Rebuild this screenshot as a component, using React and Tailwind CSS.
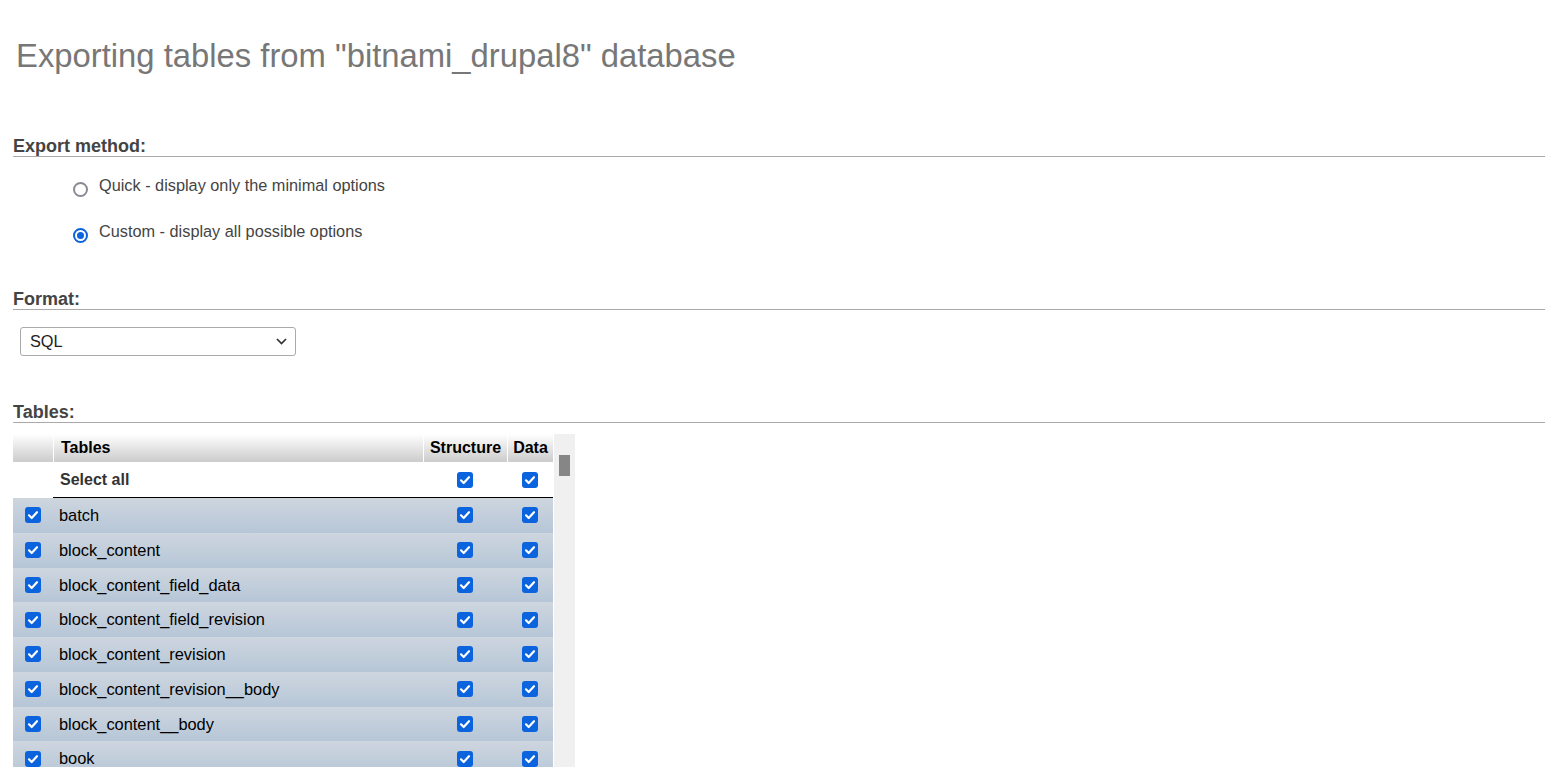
import React from 'react';

const tables = [
  'batch',
  'block_content',
  'block_content_field_data',
  'block_content_field_revision',
  'block_content_revision',
  'block_content_revision__body',
  'block_content__body',
  'book',
  'cache_bootstrap',
  'cache_config',
];

const Check = () => (
  <span className="inline-flex w-4 h-4 rounded-[3px] bg-[#0b63dd] items-center justify-center">
    <svg viewBox="0 0 16 16" className="w-4 h-4">
      <path d="M4 8.3 L6.7 11 L12 5.2" fill="none" stroke="white" strokeWidth="2.2" strokeLinecap="round" strokeLinejoin="round" />
    </svg>
  </span>
);

const Legend = ({ children, className = '' }) => (
  <div className={`text-[18px] leading-[20px] font-bold text-[#444] border-b border-[#aaa] ${className}`}>
    {children}
  </div>
);

export default function App() {
  return (
    <div className="h-screen overflow-hidden bg-white pl-[13px] pr-[11px] pt-[37px] font-['Liberation_Sans',Arial,sans-serif]">
      <h1 className="ml-[3px] text-[32.8px] leading-[38px] font-normal text-[#777]">
        Exporting tables from "bitnami_drupal8" database
      </h1>

      <Legend className="mt-[61px]">Export method:</Legend>

      <div className="mt-[18px] h-[20px] flex items-start text-[16.3px] leading-[20px] text-[#444]">
        <span className="ml-[60px] mt-[7px] w-[15px] h-[15px] shrink-0 rounded-full border-2 border-[#8a8a96] bg-white" />
        <span className="ml-[11px]">Quick - display only the minimal options</span>
      </div>
      <div className="mt-[26px] h-[20px] flex items-start text-[16.3px] leading-[20px] text-[#444]">
        <span className="ml-[60px] mt-[7px] w-[15px] h-[15px] shrink-0 rounded-full border-2 border-[#0b63dd] bg-white flex items-center justify-center">
          <span className="w-[7px] h-[7px] rounded-full bg-[#0b63dd]" />
        </span>
        <span className="ml-[11px]">Custom - display all possible options</span>
      </div>

      <Legend className="mt-[48px]">Format:</Legend>

      <div className="mt-[17px] ml-[7px] w-[276px] h-[29px] border border-[#aaa] rounded-[3px] flex items-center justify-between pl-[9px] pr-[8px] text-[16.3px] text-[#222]">
        <span>SQL</span>
        <svg viewBox="0 0 11 7" className="w-[11px] h-[7px]">
          <path d="M1 1 L5.5 5.5 L10 1" fill="none" stroke="#333" strokeWidth="1.7" />
        </svg>
      </div>

      <Legend className="mt-[46px]">Tables:</Legend>

      <div className="mt-[11px] flex h-[333px] overflow-hidden">
        <div className="w-[540px]">
          <div className="flex h-[28px] text-[16px] font-bold text-black">
            <div className="w-[40px] bg-linear-to-b from-white to-[#ccc]" />
            <div className="w-[370px] border-l border-white bg-linear-to-b from-white to-[#ccc] flex items-center pl-[7px]">Tables</div>
            <div className="w-[84px] border-l border-white bg-linear-to-b from-white to-[#ccc] flex items-center justify-center">Structure</div>
            <div className="w-[46px] border-l border-white bg-linear-to-b from-white to-[#ccc] flex items-center justify-center">Data</div>
          </div>
          <div className="flex h-[36px] text-[16px] font-bold text-[#333]">
            <div className="w-[40px]" />
            <div className="flex flex-1 border-b border-black">
              <div className="w-[370px] flex items-center pl-[7px]">Select all</div>
              <div className="w-[84px] flex items-center justify-center"><Check /></div>
              <div className="w-[46px] flex items-center justify-center"><Check /></div>
            </div>
          </div>
          {tables.map((t) => (
            <div key={t} className="flex h-[34.75px] bg-linear-to-b from-[#ced6df] to-[#b6c6d7] text-[16.4px] text-black">
              <div className="w-[40px] flex items-center justify-center"><Check /></div>
              <div className="w-[370px] flex items-center pl-[6px]">{t}</div>
              <div className="w-[84px] flex items-center justify-center"><Check /></div>
              <div className="w-[46px] flex items-center justify-center"><Check /></div>
            </div>
          ))}
        </div>
        <div className="w-[21px] ml-[1px] bg-[#f0f0f0] pt-[21px] pl-[5px]">
          <div className="w-[11px] h-[21px] bg-[#868686]" />
        </div>
      </div>
    </div>
  );
}
